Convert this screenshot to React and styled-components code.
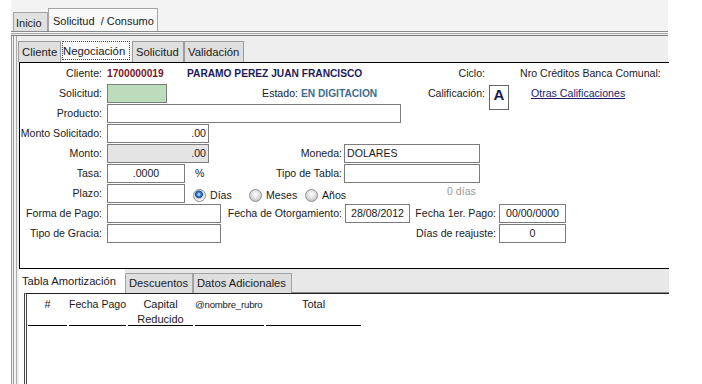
import React from "react";
import styled, { createGlobalStyle } from "styled-components";

const Global = createGlobalStyle`
  html, body { margin: 0; padding: 0; background: #fff; }
  body { font-family: "Liberation Sans", Arial, sans-serif; font-size: 10.6px; color: #1a1a1a; }
  * { box-sizing: border-box; }
`;

const Screen = styled.div`
  width: 702px;
  height: 384px;
  overflow: hidden;
  background: #fff;
  padding-left: 11px;
`;

const Window = styled.div`
  width: 657px;
  height: 384px;
  background: #f3f3f3;
  padding-top: 8px;
  display: flex;
  flex-direction: column;
`;

const OuterTabBar = styled.div`
  display: flex;
  align-items: flex-end;
  height: 23px;
  padding-left: 2px;
`;

const OuterTab = styled.div`
  width: ${(p) => p.$w}px;
  height: ${(p) => (p.$active ? 23 : 19)}px;
  border: 1px solid #a4a4a4;
  border-bottom: none;
  background: ${(p) => (p.$active ? "#f9f9f9" : "#e1e1e1")};
  display: flex;
  align-items: center;
  padding-left: ${(p) => (p.$active ? 4 : 2)}px;
  padding-top: 2px;
  white-space: pre;
  font-size: 11px;
`;

const OuterRule = styled.div`
  height: 5px;
  border-top: 1px solid #8a8a8a;
  border-bottom: 1px solid #7a7a7a;
  background: linear-gradient(to bottom, #f7f7f7 0 1px, #a8a8a8 1px 2px, #ececec 2px);
`;

const OuterBody = styled.div`
  flex: 1;
  display: flex;
  flex-direction: column;
  border-left: 3px double #9a9a9a;
  padding-left: 2px;
`;

const InnerBody = styled.div`
  flex: 1;
  display: flex;
  flex-direction: column;
  border-left: 1px solid #ababab;
  padding-left: 1px;
  background: #eeeeee;
`;

const InnerTabBar = styled.div`
  display: flex;
  align-items: flex-end;
  height: 26px;
`;

const InnerTab = styled.div`
  width: ${(p) => p.$w}px;
  height: ${(p) => (p.$active ? 23 : 21)}px;
  border: 1px solid ${(p) => (p.$active ? "#f0f0f0" : "#9c9c9c")};
  border-bottom: none;
  background: ${(p) => (p.$active ? "#fbfbfb" : "#dfdfdf")};
  display: flex;
  align-items: center;
  padding: 1px 1px 2px 3px;
  font-size: 11.3px;
  white-space: nowrap;
`;

const Focus = styled.span`
  flex: 1;
  align-self: stretch;
  display: flex;
  align-items: center;
  border: 1px dotted #444;
  margin-left: -3px;
`;

const FormPanel = styled.div`
  margin-left: 1px;
  width: 650px;
  height: 207px;
  border: 1px solid #000;
  border-right: none;
  background: #fff;
  padding-top: 1px;
`;

const Row = styled.div`
  display: flex;
  align-items: flex-start;
  height: 20px;
`;

const Label = styled.div`
  flex: none;
  width: ${(p) => p.$w}px;
  margin-left: ${(p) => p.$ml || 0}px;
  text-align: ${(p) => p.$align || "right"};
  line-height: 19px;
  white-space: nowrap;
  color: #1a1a1a;
`;

const Strong = styled.div`
  flex: none;
  width: ${(p) => p.$w}px;
  margin-left: ${(p) => p.$ml || 0}px;
  line-height: 19px;
  font-size: 10.2px;
  font-weight: bold;
  white-space: nowrap;
  color: ${(p) => p.$color};
`;

const Box = styled.div`
  flex: none;
  width: ${(p) => p.$w}px;
  height: 19px;
  margin-left: ${(p) => p.$ml || 5}px;
  border: 1px solid #7c7c7c;
  background: ${(p) =>
    p.$tone === "green" ? "#bcdcbc" : p.$tone === "gray" ? "#e4e4e4" : "#fff"};
  text-align: ${(p) => p.$align || "left"};
  line-height: 17px;
  padding: 0 2px;
  white-space: nowrap;
  overflow: hidden;
`;

const GradeBox = styled.div`
  flex: none;
  width: 20px;
  height: 25px;
  margin-left: 4px;
  margin-top: 1px;
  border: 1px solid #666;
  text-align: center;
  font-weight: bold;
  font-size: 15px;
  line-height: 17px;
  color: #1a1a4a;
  position: relative;
  z-index: 1;
  background: #fff;
`;

const LinkText = styled.a`
  margin-left: 22px;
  line-height: 19px;
  color: #1c1c6e;
  text-decoration: underline;
  white-space: nowrap;
`;

const RadioItem = styled.label`
  flex: none;
  width: ${(p) => p.$w}px;
  margin-left: ${(p) => p.$ml || 0}px;
  display: flex;
  align-items: center;
  gap: 4px;
  height: 19px;
  padding-top: 3px;
`;

const Radio = styled.span`
  width: 13px;
  height: 13px;
  border-radius: 50%;
  border: 1px solid #8c8e90;
  background: ${(p) =>
    p.$on
      ? "radial-gradient(circle at 45% 40%, #a9d0ff 0 1px, #3a78d4 2px, #1f4f9c 3.6px, #d9dde4 4.2px, #f3f3f3 6px)"
      : "radial-gradient(circle at 50% 40%, #fdfdfd 0, #e0e0e0 4px, #c8c8c8 6px)"};
`;

const Hint = styled.div`
  margin-left: ${(p) => p.$ml}px;
  line-height: 15px;
  color: #9a9a9a;
  white-space: nowrap;
`;

const BottomSection = styled.div`
  margin-left: 1px;
  width: 650px;
  flex: 1;
  display: flex;
  flex-direction: column;
  background: #fff;
`;

const BottomTabBar = styled.div`
  display: flex;
  align-items: flex-end;
  height: 24px;
  background: #e8e8e8;
`;

const BottomTab = styled.div`
  flex: none;
  width: ${(p) => p.$w}px;
  height: ${(p) => (p.$active ? 24 : 20)}px;
  background: ${(p) => (p.$active ? "#fff" : "#dedede")};
  border: 1px solid ${(p) => (p.$active ? "#fff" : "#a2a2a2")};
  border-bottom: none;
  padding-left: ${(p) => (p.$active ? 2 : 3)}px;
  padding-top: ${(p) => (p.$active ? 4 : 2)}px;
  line-height: 15px;
  white-space: nowrap;
  font-size: 11.2px;
`;

const TabFiller = styled.div`
  flex: 1;
  height: 24px;
  border-bottom: 1px solid #8a8a8a;
`;

const TableBox = styled.div`
  flex: 1;
  margin-left: 5px;
  border-top: 1px solid #222;
  border-left: 3px double #444;
  padding: 2px 0 0 1px;
  background: #fff;
`;

const HeaderGrid = styled.div`
  display: grid;
  grid-template-columns: 39px 57px 65px 69px 95px;
  column-gap: 2px;
`;

const HeaderCell = styled.div`
  height: 30px;
  border-bottom: 1px solid #000;
  text-align: ${(p) => p.$align || "center"};
  padding-top: 1px;
  line-height: 15px;
  white-space: ${(p) => (p.$wrap ? "pre-line" : "nowrap")};
  font-size: ${(p) => p.$size || 11}px;
  letter-spacing: ${(p) => (p.$tight ? "-0.2px" : "normal")};
`;

export default function App() {
  return (
    <Screen>
      <Global />
      <Window>
        <OuterTabBar>
          <OuterTab $w={35}>Inicio</OuterTab>
          <OuterTab $w={110} $active>{"Solicitud  / Consumo"}</OuterTab>
        </OuterTabBar>
        <OuterRule />
        <OuterBody>
          <InnerBody>
            <InnerTabBar>
              <InnerTab $w={43}>Cliente</InnerTab>
              <InnerTab $w={71} $active>
                <Focus>Negociación</Focus>
              </InnerTab>
              <InnerTab $w={52}>Solicitud</InnerTab>
              <InnerTab $w={60}>Validación</InnerTab>
            </InnerTabBar>

            <FormPanel>
              <Row>
                <Label $w={82}>Cliente:</Label>
                <Strong $w={80} $ml={5} $color="#7a1424">1700000019</Strong>
                <Strong $w={232} $color="#1b1b5c">PARAMO PEREZ JUAN FRANCISCO</Strong>
                <Label $w={66}>Ciclo:</Label>
                <Label $w={150} $ml={35} $align="left">Nro Créditos Banca Comunal:</Label>
              </Row>
              <Row>
                <Label $w={82}>Solicitud:</Label>
                <Box $w={60} $tone="green" />
                <Label $w={131}>Estado:</Label>
                <Strong $w={80} $ml={3} $color="#3d6e8e">EN DIGITACION</Strong>
                <Label $w={104}>Calificación:</Label>
                <GradeBox>A</GradeBox>
                <LinkText href="#">Otras Calificaciones</LinkText>
              </Row>
              <Row>
                <Label $w={82}>Producto:</Label>
                <Box $w={294} />
              </Row>
              <Row>
                <Label $w={82}>Monto Solicitado:</Label>
                <Box $w={102} $align="right">.00</Box>
              </Row>
              <Row>
                <Label $w={82}>Monto:</Label>
                <Box $w={102} $tone="gray" $align="right">.00</Box>
                <Label $w={133}>Moneda:</Label>
                <Box $w={136} $ml={2} $align="left">DOLARES</Box>
              </Row>
              <Row>
                <Label $w={82}>Tasa:</Label>
                <Box $w={78} $align="center">.0000</Box>
                <Label $w={10} $ml={10} $align="left">%</Label>
                <Label $w={137}>Tipo de Tabla:</Label>
                <Box $w={136} $ml={2} />
              </Row>
              <Row>
                <Label $w={82}>Plazo:</Label>
                <Box $w={78} />
                <RadioItem $w={56} $ml={8}>
                  <Radio $on />
                  Días
                </RadioItem>
                <RadioItem $w={56}>
                  <Radio />
                  Meses
                </RadioItem>
                <RadioItem $w={50}>
                  <Radio />
                  Años
                </RadioItem>
                <Hint $ml={92}>0 días</Hint>
              </Row>
              <Row>
                <Label $w={82}>Forma de Pago:</Label>
                <Box $w={114} />
                <Label $w={121}>Fecha de Otorgamiento:</Label>
                <Box $w={65} $ml={3} $align="center">28/08/2012</Box>
                <Label $w={82} $ml={4}>Fecha 1er. Pago:</Label>
                <Box $w={67} $ml={3} $align="center">00/00/0000</Box>
              </Row>
              <Row>
                <Label $w={82}>Tipo de Gracia:</Label>
                <Box $w={114} />
                <Label $w={275}>Días de reajuste:</Label>
                <Box $w={67} $ml={3} $align="center">0</Box>
              </Row>
            </FormPanel>

            <BottomSection>
              <BottomTabBar>
                <BottomTab $w={106} $active>Tabla Amortización</BottomTab>
                <BottomTab $w={68}>Descuentos</BottomTab>
                <BottomTab $w={99}>Datos Adicionales</BottomTab>
                <TabFiller />
              </BottomTabBar>
              <TableBox>
                <HeaderGrid>
                  <HeaderCell>#</HeaderCell>
                  <HeaderCell $size={10.6}>Fecha Pago</HeaderCell>
                  <HeaderCell $wrap>{"Capital\nReducido"}</HeaderCell>
                  <HeaderCell $align="left" $size={9.6} $tight>@nombre_rubro</HeaderCell>
                  <HeaderCell>Total</HeaderCell>
                </HeaderGrid>
              </TableBox>
            </BottomSection>
          </InnerBody>
        </OuterBody>
      </Window>
    </Screen>
  );
}
